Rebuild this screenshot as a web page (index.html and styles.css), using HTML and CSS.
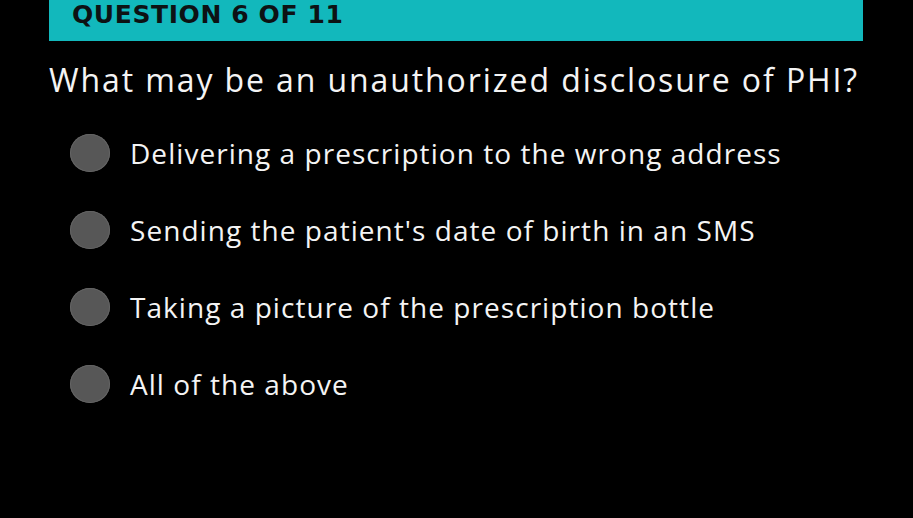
FILE: index.html
```html
<!DOCTYPE html>
<html>
<head>
<meta charset="utf-8">
<link rel="stylesheet" href="styles.css">
</head>
<body>
<div class="page">
  <div class="banner"><span class="banner-title">QUESTION 6 OF 11</span></div>
  <h1 class="question">What may be an unauthorized disclosure of PHI?</h1>
  <ul class="options">
    <li class="option"><span class="radio"></span><span class="label">Delivering a prescription to the wrong address</span></li>
    <li class="option"><span class="radio"></span><span class="label">Sending the patient's date of birth in an SMS</span></li>
    <li class="option"><span class="radio"></span><span class="label">Taking a picture of the prescription bottle</span></li>
    <li class="option"><span class="radio"></span><span class="label">All of the above</span></li>
  </ul>
</div>
</body>
</html>
```

FILE: styles.css
```css
html, body {
  margin: 0;
  padding: 0;
  background: #000;
}
body {
  width: 913px;
  height: 518px;
  overflow: hidden;
  font-family: "Open Sans", "Liberation Sans", sans-serif;
  color: #f4f4f4;
}
.page {
  padding: 0 50px 0 49px;
}
.banner {
  background: #12b8bc;
  height: 41px;
  padding-left: 23px;
  display: flex;
  align-items: flex-start;
}
.banner-title {
  font-family: "DejaVu Sans", sans-serif;
  font-weight: 700;
  font-size: 25px;
  line-height: 30px;
  color: #0d1214;
  letter-spacing: 0.6px;
  white-space: nowrap;
}
.question {
  margin: 19px 0 0 0;
  font-weight: 400;
  font-size: 32px;
  line-height: 40px;
  letter-spacing: 1.9px;
  white-space: nowrap;
}
.options {
  list-style: none;
  margin: 33px 0 0 21px;
  padding: 0;
  display: flex;
  flex-direction: column;
  gap: 37px;
}
.option {
  display: flex;
  align-items: center;
  gap: 20px;
  height: 40px;
}
.radio {
  width: 40px;
  height: 38px;
  border-radius: 50%;
  background: #575757;
  box-shadow: inset 0 0 0 1px #646464;
  flex: none;
}
.label {
  font-size: 28px;
  letter-spacing: 1.05px;
  white-space: nowrap;
}
```
